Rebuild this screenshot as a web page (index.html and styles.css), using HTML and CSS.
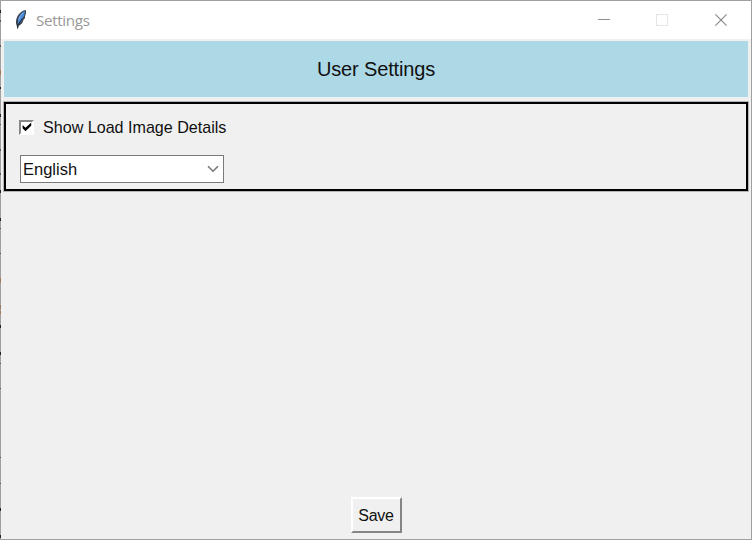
FILE: index.html
```html
<!DOCTYPE html>
<html lang="en">
<head>
<meta charset="utf-8">
<title>Settings</title>
<link rel="stylesheet" href="styles.css">
</head>
<body>
<main class="window">
  <header class="titlebar">
    <svg class="feather" width="16" height="20" viewBox="0 0 16 20">
      <path d="M12.6 0C9.4 .6 5.4 3.5 3.9 7.5C2.7 10.5 2.6 13.3 3.7 15.8L4.6 19L5.5 16C8.4 14.5 9.9 12.5 10.4 10L12 8L12 6C13.1 4 13.5 1.5 12.6 0Z" fill="#39424f"/>
      <path d="M11.8 1C8.6 2.8 6 5.8 5.2 9L4.8 14.3C7 13.2 8.6 11.5 9.2 9C10.9 6.5 12 3.5 11.8 1Z" fill="#4b8ddd"/>
      <path d="M9.2 8.5L5.2 14.5L4.6 18.5" fill="none" stroke="#17202d" stroke-width=".9"/>
      <path d="M10 2.8C7.8 4.6 6.4 6.5 5.9 9.7" fill="none" stroke="#8db9ee" stroke-width=".9"/>
    </svg>
    <span class="title">Settings</span>
    <svg class="controls" width="130" height="12" viewBox="0 0 130 12" fill="none">
      <path d="M0 5.5H12" stroke="#8c8c8c"/>
      <rect x="58.5" y=".5" width="11" height="11" stroke="#e6e6e6"/>
      <path d="M117.4 .4L128.6 11.6M128.6 .4L117.4 11.6" stroke="#8c8c8c" stroke-width="1.2"/>
    </svg>
  </header>
  <section class="content">
    <h1 class="banner">User Settings</h1>
    <div class="group">
      <label class="check-row">
        <span class="checkbox">
          <svg width="10" height="10" viewBox="0 0 10 10"><path d="M.6 3.1L3.5 5.8L9.2 .5V3.8L3.5 9.2L.6 6.3Z" fill="#000"/></svg>
        </span>
        <span class="check-text">Show Load Image Details</span>
      </label>
      <div class="combo">
        <span class="combo-text">English</span>
        <svg width="12" height="8" viewBox="0 0 12 8"><path d="M1 1.2L6 6.2L11 1.2" fill="none" stroke="#777" stroke-width="1.6"/></svg>
      </div>
    </div>
    <button class="save" type="button"><span class="save-text">Save</span></button>
  </section>
  <svg class="edge" width="1" height="540" viewBox="0 0 1 540">
    <path d="M.5 10v3M.5 87v2M.5 114v3M.5 190v3M.5 218v3M.5 325v3M.5 352v3M.5 508v3M.5 535v3" stroke="#222"/>
    <path d="M.5 20v2M.5 45v2M.5 124v1M.5 149v2M.5 173v2M.5 228v1M.5 253v1M.5 363v1M.5 388v1M.5 457v1M.5 483v1" stroke="#555"/>
    <path d="M.5 70v5M.5 278v5M.5 305v4M.5 311v3" stroke="#9b7b5c"/>
  </svg>
</main>
</body>
</html>
```
FILE: styles.css
```css
* { box-sizing: border-box; }
body {
  margin: 0;
  overflow: hidden;
  font-family: "Liberation Sans", Arial, sans-serif;
  color: #111;
}
.window {
  position: relative;
  display: flex;
  flex-direction: column;
  width: 752px;
  height: 540px;
  border: 1px solid #a0a0a0;
  background: #f0f0f0;
}
.edge {
  position: absolute;
  top: -1px;
  left: -1px;
}
.titlebar {
  display: flex;
  align-items: center;
  flex: none;
  height: 38px;
  padding: 0 23px 0 12px;
  background: #fff;
}
.feather { margin-right: 7px; }
.title {
  margin-top: -1px;
  font: 15.2px "Open Sans", sans-serif;
  letter-spacing: -.35px;
  color: #999;
}
.controls { margin-left: auto; }
.content {
  display: flex;
  flex-direction: column;
  flex: 1;
  padding: 2px 3px 6px;
}
.banner {
  display: flex;
  align-items: center;
  justify-content: center;
  height: 56px;
  margin: 0 0 5px;
  background: #add8e6;
  font-size: 20px;
  font-weight: 400;
  letter-spacing: -.15px;
}
.group {
  height: 89px;
  padding: 13px 0 0 14px;
  border: 2px solid #000;
  box-shadow: 0 0 0 1px rgba(0, 0, 0, .25);
}
.check-row { display: flex; align-items: center; height: 20px; }
.checkbox {
  display: flex;
  align-items: center;
  justify-content: center;
  width: 15px;
  height: 15px;
  margin-left: -1px;
  border: 2px solid;
  border-color: #878787 #fff #fff #878787;
  background: #fff;
}
.check-text { margin-left: 9px; font-size: 16.1px; white-space: nowrap; }
.combo {
  display: flex;
  align-items: center;
  justify-content: space-between;
  width: 204px;
  height: 28px;
  margin-top: 18px;
  padding: 0 4px 0 2px;
  border: 1px solid #7a7a7a;
  background: #fff;
}
.combo-text { font-size: 16.5px; }
.save {
  width: 51px;
  height: 36px;
  margin: auto auto 0;
  padding: 2px 0 0;
  border: 2px solid;
  border-color: #fff #858585 #858585 #fff;
  background: #f0f0f0;
  color: #111;
  font: 16px "Liberation Sans", Arial, sans-serif;
  letter-spacing: -.3px;
}
```
